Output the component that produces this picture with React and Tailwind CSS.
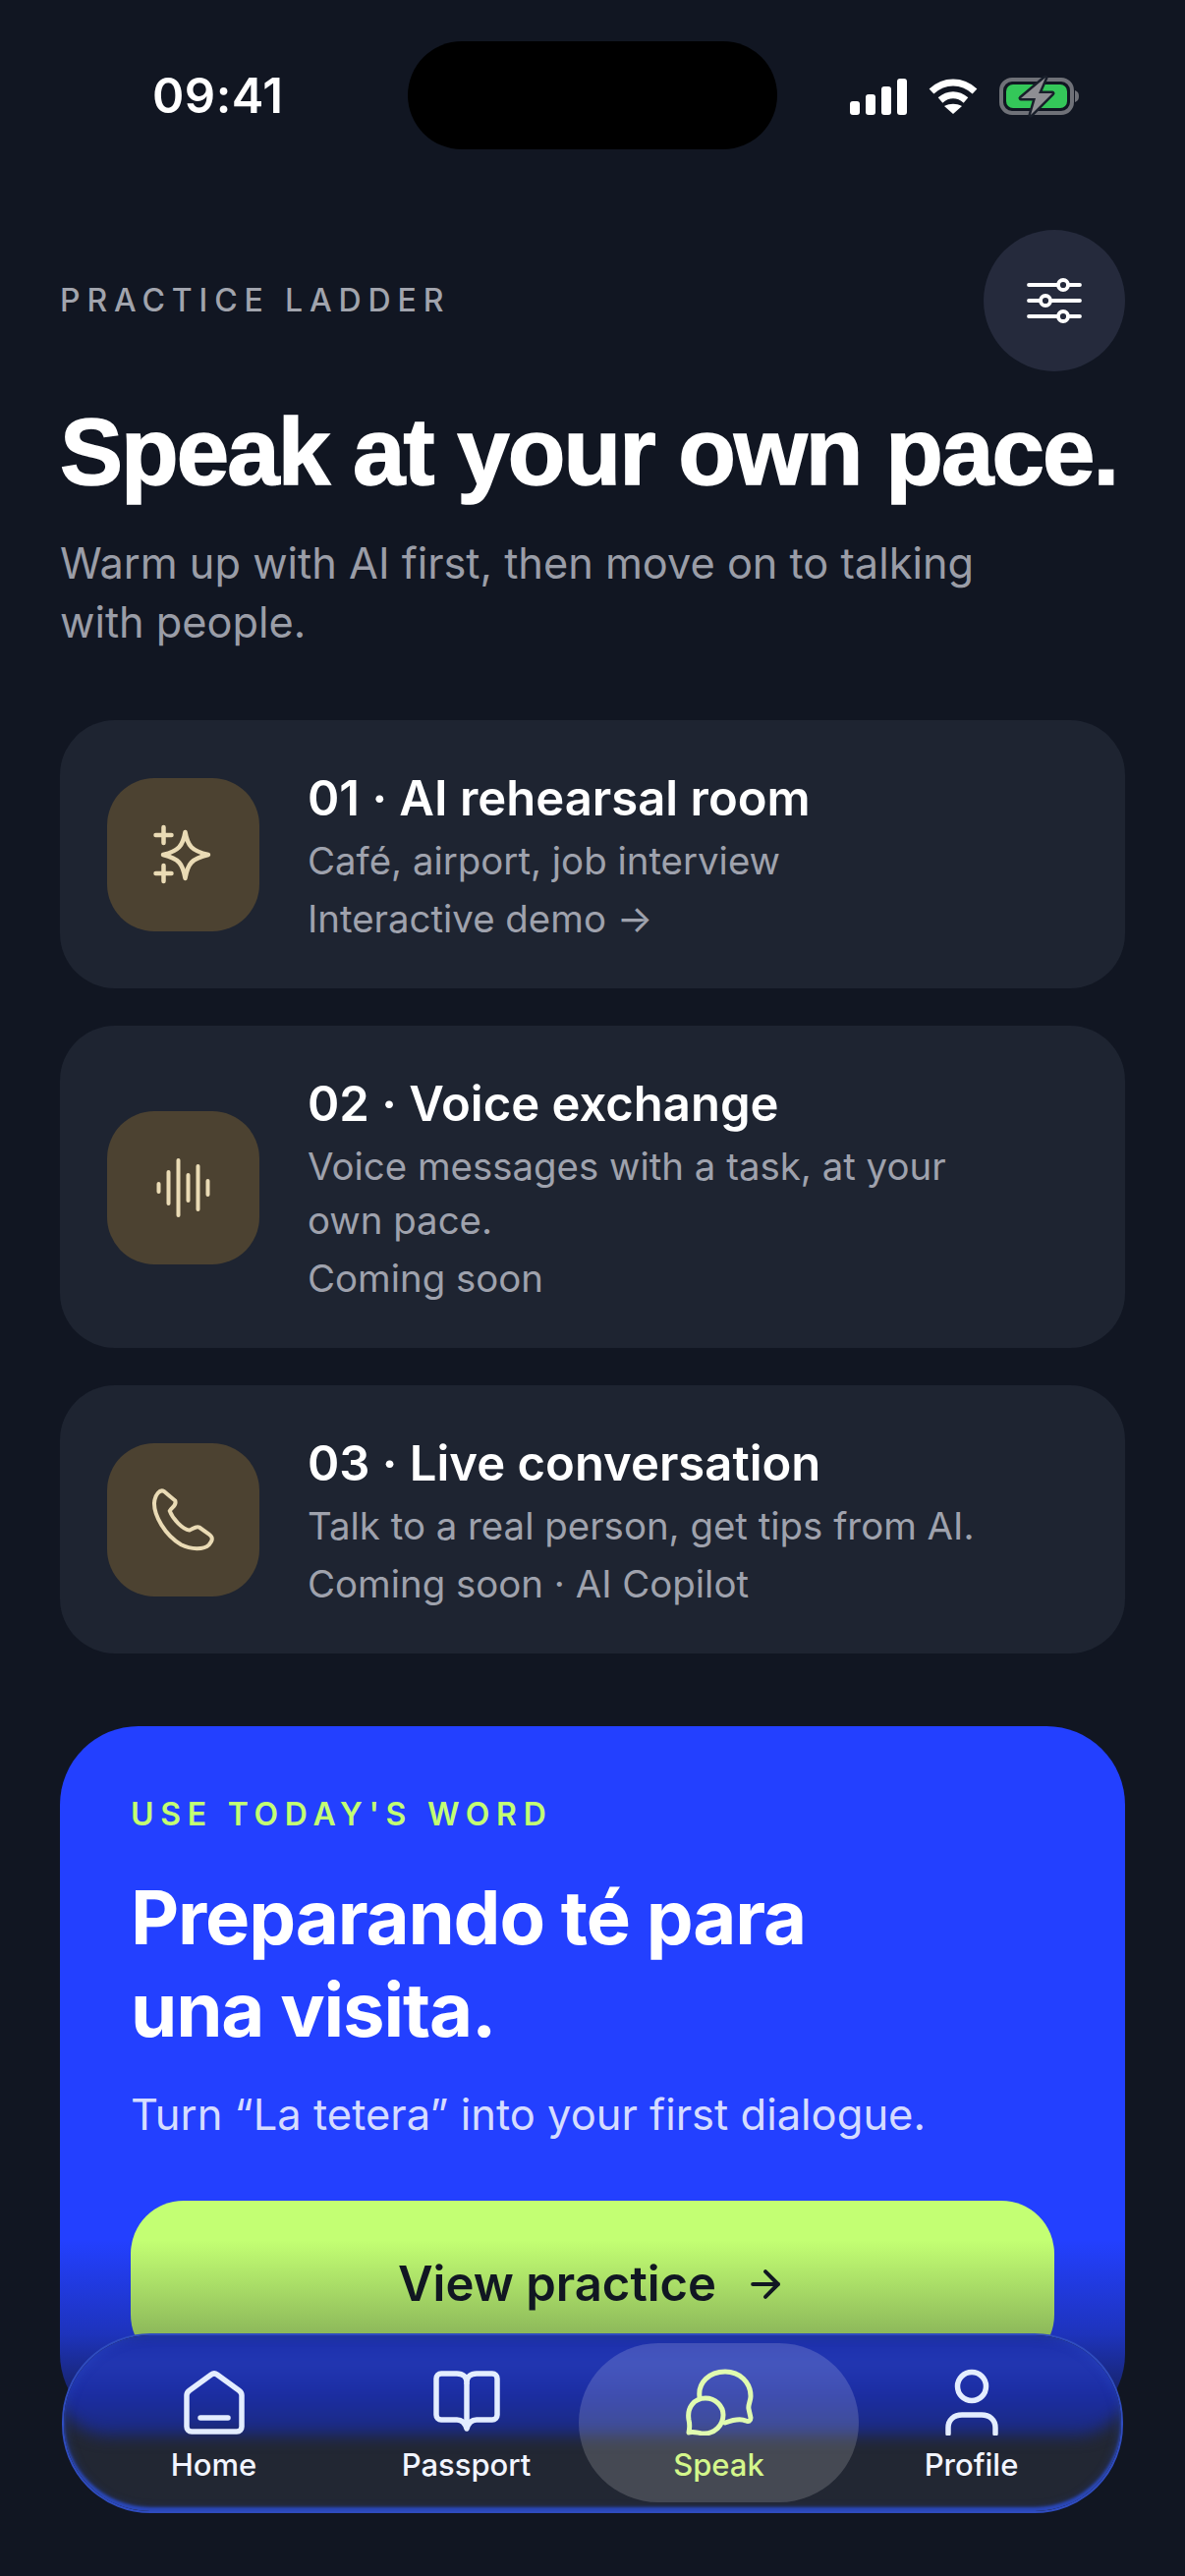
import { ArrowRight } from 'lucide-react';

function StatusBar() {
    return (
        <div className="flex h-[200px] items-start">
            <div className="w-[415px] pl-[155px] pt-[70px]">
                <span className="text-[49px] leading-[56px] font-semibold text-white tracking-[0.01em]">09:41</span>
            </div>
            <div className="mt-[42px] h-[110px] w-[376px] rounded-[55px] bg-black"></div>
            <div className="mt-[76px] ml-[74px] flex items-center gap-[22px]">
                <svg width="58" height="37" viewBox="0 0 58 37" fill="white">
                    <rect x="0" y="23" width="10" height="14" rx="3" />
                    <rect x="16" y="16" width="10" height="21" rx="3" />
                    <rect x="32" y="8" width="10" height="29" rx="3" />
                    <rect x="48" y="0" width="10" height="37" rx="3" />
                </svg>
                <svg width="50" height="37" viewBox="0 0 50 37" fill="none" stroke="white" strokeWidth="7">
                    <path d="M3 13C16 1 34 1 47 13" />
                    <path d="M12 22C20 15 30 15 38 22" />
                    <path d="M25 36L16 28C22 25 28 25 34 28Z" fill="white" stroke="none" />
                </svg>
                <svg width="82" height="44" viewBox="0 0 82 44" fill="none">
                    <rect x="2" y="5" width="72" height="34" rx="11" stroke="#6f7178" strokeWidth="4" />
                    <rect x="7" y="10" width="62" height="24" rx="7" fill="#34c759" />
                    <path d="M77 16c3 1 4 3 4 6s-1 5-4 6z" fill="#6f7178" />
                    <path d="M47 3L22 24H37L32 41L54 19H40Z" fill="#8e8e93" stroke="#181e2a" strokeWidth="5" strokeLinejoin="round" paintOrder="stroke" />
                </svg>
            </div>
        </div>
    );
}

function PracticeCard({ icon, title, desc, status }) {
    return (
        <div className="flex items-center gap-[49px] rounded-[56px] bg-[#1e2431] pt-[44px] pb-[43px] pl-[48px] pr-[130px]">
            <div className="flex h-[156px] w-[155px] shrink-0 items-center justify-center rounded-[48px] bg-[#4c4231] text-[#eadbb5]">
                {icon}
            </div>
            <div className="min-w-0">
                <div className="whitespace-nowrap text-[49px] leading-[72px] font-semibold text-white">{title}</div>
                <div className="text-[38.4px] leading-[55px] text-[#9fa2ad]">{desc}</div>
                <div className="mt-[4px] whitespace-nowrap text-[38.4px] leading-[55px] text-[#9fa2ad]">{status}</div>
            </div>
        </div>
    );
}

function NavItem({ icon, label, active }) {
    return (
        <div className={`relative z-10 flex flex-col items-center self-start pt-[35px] ${active ? 'text-[#e0fbb0]' : 'text-[#e3edff]'}`}>
            <div className="flex h-[66px] items-center">{icon}</div>
            <span className={`mt-[13px] text-[31px] leading-[36px] font-medium ${active ? 'text-[#d4f78b]' : 'text-[#f2f5ff]'}`}>{label}</span>
        </div>
    );
}

export default function App() {
    return (
        <div className="relative h-[2622px] w-[1206px] overflow-hidden bg-[#111622] font-['Inter',sans-serif]">
            <StatusBar />

            <div className="px-[61px]">
                <div className="flex items-center justify-between pt-[34px]">
                    <span className="text-[32px] leading-[40px] font-medium tracking-[0.215em] text-[#a1a4ad]">PRACTICE LADDER</span>
                    <div className="flex h-[144px] w-[144px] items-center justify-center rounded-full bg-[#252a3c] text-white">
                        <svg width="56" height="48" viewBox="0 0 56 48" fill="none" stroke="currentColor" strokeWidth="3.8" strokeLinecap="round">
                            <path d="M2 8H32M42 8H54" />
                            <circle cx="37" cy="8" r="5" />
                            <path d="M2 24H14M24 24H54" />
                            <circle cx="19" cy="24" r="5" />
                            <path d="M2 40H32M42 40H54" />
                            <circle cx="37" cy="40" r="5" />
                        </svg>
                    </div>
                </div>

                <h1 className="mt-[27px] whitespace-nowrap text-[96px] leading-[110px] font-bold tracking-[-0.02em] text-white font-['Liberation_Sans',sans-serif] [-webkit-text-stroke:1.5px_white]">Speak at your own pace.</h1>
                <p className="mt-[28px] w-[1000px] text-[43.3px] leading-[60px] text-[#9a9da7]">Warm up with AI first, then move on to talking with people.</p>

                <div className="mt-[70px] flex flex-col gap-[38px]">
                    <PracticeCard
                        icon={
                            <svg width="64" height="64" viewBox="0 0 64 64" fill="none" stroke="currentColor" strokeWidth="4.5" strokeLinecap="round" strokeLinejoin="round">
                                <path d="M33.5 9C36 23 40 28 57 32C40 36 36 41 33.5 56C31 41 27 36 11 32C27 28 31 23 33.5 9Z" />
                                <path d="M11.5 4V20M3.5 12H19.5" />
                                <path d="M11.5 43V59M3.5 51H19.5" />
                            </svg>
                        }
                        title="01 · AI rehearsal room"
                        desc="Café, airport, job interview"
                        status="Interactive demo →"
                    />
                    <PracticeCard
                        icon={
                            <svg width="64" height="64" viewBox="0 0 64 64" fill="none" stroke="currentColor" strokeWidth="4" strokeLinecap="round">
                                <path d="M6.5 28V36" />
                                <path d="M16.5 16V48" />
                                <path d="M26.5 4V60" />
                                <path d="M36.5 19V45" />
                                <path d="M46.5 10V54" />
                                <path d="M56.5 25V39" />
                            </svg>
                        }
                        title="02 · Voice exchange"
                        desc="Voice messages with a task, at your own pace."
                        status="Coming soon"
                    />
                    <PracticeCard
                        icon={
                            <svg width="72" height="72" viewBox="0 0 72 72" fill="none" stroke="currentColor" strokeWidth="4" strokeLinejoin="round">
                                <path d="M16 7C11.7 4.7 6.7 9.9 6 19C5.7 31.6 16.7 51.4 33.3 61.3C43.3 66.4 56.7 66.4 61.7 61.3C66 56.5 65.7 53.4 61.7 50.6L51.7 43.5C48.3 41.9 45 45.5 41.7 46.6C35 45.5 25 35.6 21.7 26.9C22.7 23.7 29.3 21.7 27.3 16.6Z" />
                            </svg>
                        }
                        title="03 · Live conversation"
                        desc="Talk to a real person, get tips from AI."
                        status="Coming soon · AI Copilot"
                    />
                </div>

                <div className="mt-[74px] h-[719px] rounded-[80px] bg-[#2340ff] px-[72px] pt-[72px]">
                    <div className="text-[32px] leading-[36px] font-semibold tracking-[0.21em] text-[#c3ff73]">USE TODAY'S WORD</div>
                    <h2 className="mt-[39px] text-[76px] leading-[94px] font-bold tracking-[-0.015em] text-white">Preparando té para<br />una visita.</h2>
                    <p className="mt-[32px] text-[43.5px] leading-[56px] text-[#d5dcff]">Turn “La tetera” into your first dialogue.</p>
                    <div className="mt-[60px] flex h-[170px] items-center justify-center gap-[28px] rounded-[54px] bg-[#c3ff73] text-[49px] font-semibold text-[#111722]">
                        View practice <ArrowRight size={44} strokeWidth={2.2} />
                    </div>
                </div>
            </div>

            {/* fade under the nav */}
            <div className="absolute inset-x-0 bottom-0 h-[342px] bg-[linear-gradient(to_bottom,rgba(17,22,34,0)_0%,rgba(17,22,34,0.3)_28%,rgba(17,22,34,0.7)_47%,rgba(17,22,34,1)_60%)]"></div>

            {/* floating tab bar */}
            <div className="absolute top-[2375px] left-[63px] grid h-[183px] w-[1080px] grid-cols-4 overflow-hidden rounded-[90px] border-2 border-[#2f4cbf] bg-[#222733] px-[24px]">
                <div className="absolute -inset-x-[10px] -top-[10px] h-[112px] rounded-b-[56px] bg-[linear-gradient(to_bottom,#202d85_0%,#1c2fae_14%,#2237b2_34%,#1b2da4_60%,#1b2a80_100%)] blur-[8px]"></div>
                <div className="absolute inset-0 rounded-[88px] shadow-[inset_0_-4px_3px_#2a48bb,inset_0_0_10px_2px_rgba(44,78,200,0.35)]"></div>
                <div className="absolute top-[8px] left-[524px] h-[162px] w-[285px] rounded-[81px] bg-white/[0.16]"></div>
                <NavItem
                    label="Home"
                    icon={
                        <svg width="64" height="66" viewBox="0 0 64 66" fill="none" stroke="currentColor" strokeWidth="5.5" strokeLinecap="round" strokeLinejoin="round">
                            <path d="M4 26C4 24 5 22.5 7 21L29 5C31 3.5 33 3.5 35 5L57 21C59 22.5 60 24 60 26V58C60 61 58 63 55 63H9C6 63 4 61 4 58Z" />
                            <path d="M18 49H46" />
                        </svg>
                    }
                />
                <NavItem
                    label="Passport"
                    icon={
                        <svg width="68" height="64" viewBox="0 0 68 64" fill="none" stroke="currentColor" strokeWidth="5.5" strokeLinejoin="round">
                            <path d="M34 12C34 6 30 3 24 3H8A5 5 0 0 0 3 8V45A5 5 0 0 0 8 50H24C28 50 32 52 34 59C36 52 40 50 44 50H60A5 5 0 0 0 65 45V8A5 5 0 0 0 60 3H44C38 3 34 6 34 12Z" />
                            <path d="M34 12V56" />
                        </svg>
                    }
                />
                <NavItem
                    active
                    label="Speak"
                    icon={
                        <svg width="70" height="68" viewBox="0 0 70 68" fill="none" stroke="currentColor" strokeWidth="5" strokeLinecap="round" strokeLinejoin="round">
                            <path d="M15 29C13 14 25 3 41 3C56 3 67 14 67 28C67 33 64 37 65 41L67 50C67 53 65 54 62 53C56 50 49 52 41 55" />
                            <path d="M21 30C31 30 39 38 39 47C39 58 30 66 20 66C14 66 9 63 4 65C5 60 5 56 4 52C2 40 9 30 21 30Z" />
                        </svg>
                    }
                />
                <NavItem
                    label="Profile"
                    icon={
                        <svg width="58" height="68" viewBox="0 0 58 68" fill="none" stroke="currentColor" strokeWidth="5.5" strokeLinecap="round">
                            <circle cx="29" cy="18" r="14.5" />
                            <path d="M5 66V60C5 52 11 47 19 47H39C47 47 53 52 53 60V66" />
                        </svg>
                    }
                />
            </div>
        </div>
    );
}
